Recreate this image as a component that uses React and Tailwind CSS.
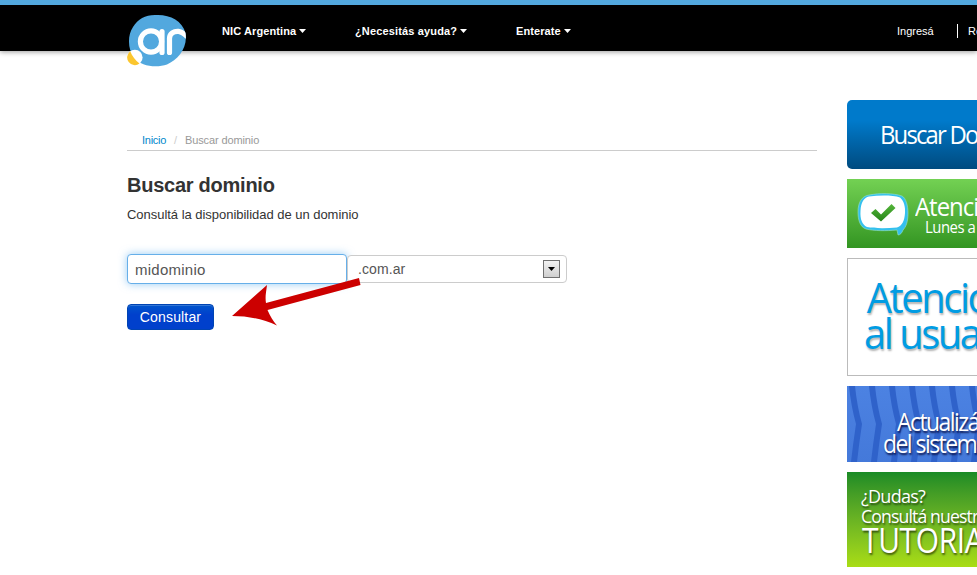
import React from "react";

const SANS = "font-['Liberation_Sans',Arial,sans-serif]";
const HUMAN = "font-['Open_Sans','Noto_Sans',sans-serif]";

function Logo() {
  return (
    <svg width="60" height="54" viewBox="0 0 60 54" className="block shrink-0">
      <defs>
        <clipPath id="blob">
          <path d="M28 1C42 0 55 6 58.500 19C61 34 51 46 40 50.500C30 54 14 53 7 43C1 36 0 22 6 13C11 5 18 1 28 1Z" />
        </clipPath>
      </defs>
      <path d="M28 1C42 0 55 6 58.500 19C61 34 51 46 40 50.500C30 54 14 53 7 43C1 36 0 22 6 13C11 5 18 1 28 1Z" fill="#52a8de" />
      <circle cx="7.900" cy="43.400" r="7.700" fill="#fff" />
      <path d="M3.200 37.300A7.700 7.700 0 0 0 12.500 49.600C8.500 46.500 5 42 3.200 37.300Z" fill="#fbc62f" />
      <g fill="none" stroke="#fff" strokeWidth="5.200" strokeLinecap="round" clipPath="url(#blob)">
        <circle cx="24" cy="27.500" r="10.600" />
        <path d="M35 17.500V38.500" />
        <path d="M42.500 38.500V24.500C42.500 19.500 47 17 51.500 17.400C54.500 17.700 56.500 19 60 22.500" />
      </g>
    </svg>
  );
}

function NavItem({ label, className }) {
  return (
    <a className={"flex items-center gap-[3px] text-[11px] leading-[14px] font-bold text-white whitespace-nowrap " + className}>
      {label}
      <svg width="7" height="4" viewBox="0 0 7 4" className="-mt-px"><path d="M0 0H7L3.500 4Z" fill="#fff" /></svg>
    </a>
  );
}

function Header() {
  return (
    <header className="relative z-10 h-[51px] border-t-[5px] border-[#52a8de] bg-black shadow-[0_1px_5px_rgba(0,0,0,0.4)]">
      <div className="flex h-[46px] items-start pl-[127px]">
        <div className="mt-[9px] h-[37px] w-[60px]"><Logo /></div>
        <nav className="flex pt-[19px] pl-[35px]">
          <NavItem label="NIC Argentina" className="w-[133px] tracking-[0.1px]" />
          <NavItem label="¿Necesitás ayuda?" className="w-[161px] tracking-[0.15px]" />
          <NavItem label="Enterate" className="w-[100px] tracking-[0.1px]" />
        </nav>
        <div className="ml-auto flex w-[80px] shrink-0 items-center overflow-hidden pt-[19px] text-[11px] leading-[14px] text-white whitespace-nowrap">
          <a className="w-[60px] shrink-0">Ingresá</a>
          <a className="shrink-0 border-l border-white pl-[10px]">Registrate</a>
        </div>
      </div>
    </header>
  );
}

function Arrow() {
  return (
    <svg width="130" height="52" viewBox="0 0 130 52" className="absolute left-[105px] top-[21px]">
      <path d="M0 41L35 10C34 18 33 22 34 28L127 3L128.500 10L35.500 35C38 41 41 46 45 50.500C31 44 16 41 0 41Z" fill="#cc0000" />
    </svg>
  );
}

function SearchForm() {
  return (
    <form className="relative mt-[30px]">
      <div className="flex items-start">
        <div className="h-[30px] w-[220px] rounded-[4px] border border-[#66afe9] bg-white pl-[7px] text-[15px] leading-[30px] tracking-[0.25px] text-[#555] shadow-[0_0_8px_rgba(82,168,236,0.6)]">
          midominio
        </div>
        <div className="mt-px flex h-[28px] w-[220px] items-center justify-between rounded-[4px] border border-[#ccc] bg-white pr-[6px] pl-[10px] text-[14px] leading-[26px] tracking-[0.1px] text-[#555]">
          <span>.com.ar</span>
          <span className="flex h-[18px] w-[17px] items-center justify-center border border-[#707070] bg-gradient-to-b from-[#f2f2f2] to-[#cfcfcf]">
            <svg width="7" height="4" viewBox="0 0 7 4"><path d="M0 0H7L3.500 4Z" fill="#000" /></svg>
          </span>
        </div>
      </div>
      <button type="button" className="mt-[20px] block h-[26px] w-[87px] rounded-[4px] border border-[#0044b3] bg-gradient-to-b from-[#0055cc] to-[#0040cc] to-40% text-[14px] leading-[24px] tracking-[0.15px] text-white shadow-[inset_0_1px_0_rgba(255,255,255,0.2)]">
        Consultar
      </button>
      <Arrow />
    </form>
  );
}

function Chevrons() {
  const xs = [-40, -20, 0, 20, 40, 60, 80, 100, 120];
  return (
    <svg width="130" height="76" viewBox="0 0 130 76" className="absolute inset-0">
      {xs.map((x) => (
        <path key={x} d={`M${x + 2} 0H${x + 8}Q${x + 10} 20 ${x + 15} 38Q${x + 12} 58 ${x + 10} 76H${x + 4}Q${x + 6} 58 ${x + 9} 38Q${x + 4} 20 ${x + 2} 0Z`} fill="#2f62ca" />
      ))}
    </svg>
  );
}

function Banners() {
  return (
    <aside className={"flex w-[130px] shrink-0 flex-col overflow-hidden pt-[49px] whitespace-nowrap " + HUMAN}>
      <div className="h-[69px] w-[230px] rounded-[5px] bg-gradient-to-b from-[#007acb] from-30% to-[#004b80] pt-[18px] pl-[33px] text-[26px] leading-[32px] tracking-[-2px] text-white">
        <div className="origin-left scale-x-[0.92]">Buscar Dominio</div>
      </div>
      <div className="mt-[10px] flex h-[69px] w-[230px] bg-gradient-to-b from-[#73d153] to-[#329521] text-white">
        <svg width="54" height="43" viewBox="0 0 54 43" className="mt-[14px] ml-[9px] shrink-0">
          <defs>
            <linearGradient id="tick" x1="0" y1="0" x2="0" y2="1">
              <stop offset="0" stopColor="#55b63b" />
              <stop offset="1" stopColor="#268518" />
            </linearGradient>
          </defs>
          <path d="M13 2C24 0 37 0 46 3C50 5 52 13 52 20C52 29 50 34 47 37C46 40 44 42 42 42L41 37C30 38 18 38 10 36C4 34 2 27 2 19C2 9 6 3 13 2Z" fill="#34c0ee" stroke="#9be0c3" strokeWidth="0.600" />
          <path d="M13 3.500C24 2 37 2 44 4.500C48 8 49.500 14 49 20C48.500 28 46 33 41 34.500C30 35.500 18 35.500 11 34C6 31.500 4 26 4.500 18C5 9 8 4.500 13 3.500Z" fill="#fff" />
          <path d="M15 20L19.500 16L25 21.500L35.500 11L39.500 15L25 28.500Z" fill="url(#tick)" />
        </svg>
        <div className="ml-[5px] pt-[12px]">
          <div className="origin-left scale-x-[0.92] text-[26px] leading-[31px] tracking-[-1.1px]">Atención</div>
          <div className="-mt-[5px] ml-[10px] origin-left scale-x-[0.93] text-[16px] leading-[20px] tracking-[-0.5px]">Lunes a viernes</div>
        </div>
      </div>
      <div className="mt-[10px] h-[118px] w-[230px] border border-[#bbb] bg-white pt-[20px] pl-[16px] text-[42px] leading-[36px] tracking-[-2.600px] text-[#009ce3] [text-shadow:1px_2px_2px_rgba(0,0,0,0.3)]">
        <div className="origin-left scale-x-[0.95] pl-[3px]">Atención</div>
        <div className="origin-left scale-x-[0.95]">al usuario</div>
      </div>
      <div className="relative mt-[10px] h-[76px] w-[230px] bg-gradient-to-b from-[#4c82e2] to-[#4479da]">
        <Chevrons />
        <div className="relative pt-[24px] pl-[36px] text-[25px] leading-[22px] tracking-[-1.7px] text-white [text-shadow:1px_2px_2px_rgba(0,0,50,0.8)]">
          <div className="ml-[14px] origin-left scale-x-[0.92]">Actualizá</div>
          <div className="origin-left scale-x-[0.92]">del sistema</div>
        </div>
      </div>
      <div className="mt-[10px] h-[95px] w-[230px] bg-gradient-to-b from-[#188b26] to-[#a9dd14] pt-[15px] pl-[14px] text-white [text-shadow:1px_2px_2px_rgba(0,0,0,0.55)]">
        <div className="origin-left scale-x-[0.95] text-[19px] leading-[19px] tracking-[-0.8px]">¿Dudas?</div>
        <div className="origin-left scale-x-[0.93] text-[19px] leading-[20px] tracking-[-0.95px]">Consultá nuestros</div>
        <div className="ml-px origin-left scale-x-[0.88] text-[34px] leading-[28px] tracking-[-0.4px]">TUTORIALES</div>
      </div>
    </aside>
  );
}

export default function App() {
  return (
    <div className={"h-[575px] w-full overflow-hidden bg-white " + SANS}>
      <Header />
      <div className="flex pl-[127px]">
        <main className="mr-[30px] w-[690px] shrink-0 pt-[80px]">
          <div className="flex h-[20px] border-b border-[#ccc] pl-[15px] text-[11px] leading-[18px]">
            <a className="w-[24px] tracking-[-0.25px] text-[#0088cc]">Inicio</a>
            <span className="w-[19px] text-center text-[#ccc]">/</span>
            <span className="tracking-[-0.12px] text-[#999]">Buscar dominio</span>
          </div>
          <h1 className="mt-[22px] text-[20px] leading-[24px] font-bold tracking-[-0.25px] text-[#333]">Buscar dominio</h1>
          <p className="mt-[9px] text-[13px] leading-[18px] tracking-[-0.03px] text-[#333]">Consultá la disponibilidad de un dominio</p>
          <SearchForm />
        </main>
        <Banners />
      </div>
    </div>
  );
}
